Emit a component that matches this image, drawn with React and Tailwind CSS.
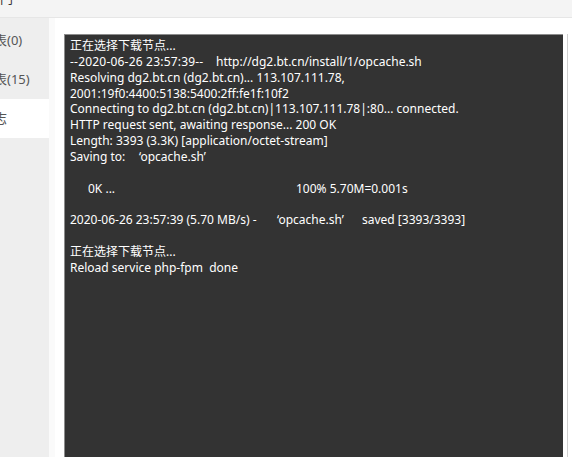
import React from 'react';

const LOG = [
  '正在选择下载节点...',
  'FETCH',
  'Resolving dg2.bt.cn (dg2.bt.cn)... 113.107.111.78,',
  '2001:19f0:4400:5138:5400:2ff:fe1f:10f2',
  'Connecting to dg2.bt.cn (dg2.bt.cn)|113.107.111.78|:80... connected.',
  'HTTP request sent, awaiting response... 200 OK',
  'Length: 3393 (3.3K) [application/octet-stream]',
  'SAVING',
  '',
  'PROGRESS',
  '',
  'SAVED',
  '',
  '正在选择下载节点...',
  'Reload service php-fpm  done',
];

const tabs = [
  { label: '表(0)', active: false },
  { label: '表(15)', active: false },
  { label: '志', active: true },
];

const Row = ({ children }) => <div className="flex h-[15.85px] whitespace-pre">{children}</div>;

export default function App() {
  const renderLine = (line, i) => {
    if (line === 'FETCH') {
      return (
        <Row key={i}>
          <span className="w-[146px] tracking-[0.2px]">--2020-06-26 23:57:39--</span>
          <span>http://dg2.bt.cn/install/1/opcache.sh</span>
        </Row>
      );
    }
    if (line === 'SAVING') {
      return (
        <Row key={i}>
          <span className="w-[69px]">Saving to:</span>
          <span>‘opcache.sh’</span>
        </Row>
      );
    }
    if (line === 'PROGRESS') {
      return (
        <Row key={i}>
          <span className="w-[226px] pl-[18px]">0K ...</span>
          <span>100% 5.70M=0.001s</span>
        </Row>
      );
    }
    if (line === 'SAVED') {
      return (
        <Row key={i}>
          <span className="w-[207px]">2020-06-26 23:57:39 (5.70 MB/s) -</span>
          <span className="w-[85px]">‘opcache.sh’</span>
          <span>saved [3393/3393]</span>
        </Row>
      );
    }
    return (
      <div key={i} className="whitespace-pre h-[15.85px]">
        {line}
      </div>
    );
  };

  return (
    <div
      className="w-[572px] h-[457px] overflow-hidden bg-white flex flex-col"
      style={{ fontFamily: '"Noto Sans", "Noto Sans CJK SC", sans-serif' }}
    >
      {/* title bar, cut off at the top */}
      <div className="h-[18px] shrink-0 bg-[#f4f4f4] border-b border-[#e6e6e6] overflow-hidden">
        <div className="-mt-[10px] text-[13px] text-[#333] leading-[16px]">门</div>
      </div>

      <div className="flex flex-1 min-h-0">
        {/* sidebar */}
        <div className="w-[49px] shrink-0 bg-[#eeeeee] pt-[3px] flex flex-col">
          {tabs.map((t) => (
            <div
              key={t.label}
              className={`h-[39px] flex items-center text-[13px] text-[#555] overflow-hidden whitespace-nowrap ${
                t.active ? 'bg-white' : ''
              }`}
            >
              <span className="-ml-[6px]">{t.label}</span>
            </div>
          ))}
        </div>
        <div className="w-[6px] shrink-0 bg-[#fafafa]" />

        {/* log output */}
        <div className="flex-1 flex pl-[9px] pt-[16px] pr-[4px]">
          <div className="w-[499px] h-full bg-[#333333] border-l border-t border-[#8c8c8c] pl-[5px] pt-[3px] text-white text-[12px] leading-[15.85px]">
            {LOG.map(renderLine)}
          </div>
          <div className="w-[1px] h-full bg-[#d0d0d0] ml-[4px]" />
        </div>
      </div>
    </div>
  );
}
